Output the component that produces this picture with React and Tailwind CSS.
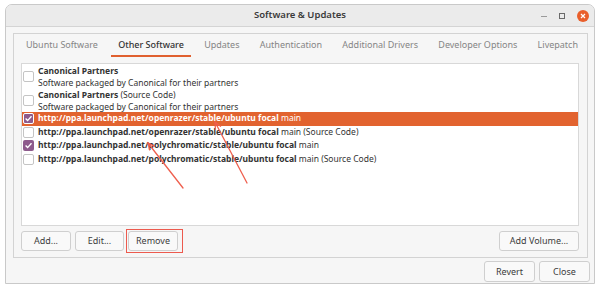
import React from "react";

const tabs = [
  "Ubuntu Software",
  "Other Software",
  "Updates",
  "Authentication",
  "Additional Drivers",
  "Developer Options",
  "Livepatch",
];

const sources = [
  { url: "http://ppa.launchpad.net/openrazer/stable/ubuntu focal", on: true, active: true },
  { url: "http://ppa.launchpad.net/openrazer/stable/ubuntu focal", on: false, src: true },
  { url: "http://ppa.launchpad.net/polychromatic/stable/ubuntu focal", on: true },
  { url: "http://ppa.launchpad.net/polychromatic/stable/ubuntu focal", on: false, src: true },
];

function Check({ on, light }) {
  if (on) {
    return (
      <span
        className={
          "w-[11px] h-[11px] rounded-[2px] bg-[#8d5a8c] flex items-center justify-center shrink-0 " +
          (light ? "border border-white" : "")
        }
      >
        <svg width="9" height="9" viewBox="0 0 9 9">
          <path d="M1.6 4.6l2 2 3.9-4.4" stroke="white" strokeWidth="1.4" fill="none" />
        </svg>
      </span>
    );
  }
  return <span className="w-[11px] h-[11px] rounded-[2px] bg-white border border-[#c4c4c4] shrink-0" />;
}

function Btn({ children, className = "" }) {
  return (
    <div
      className={
        "h-[20px] flex items-center justify-center bg-[#f9f9f9] border border-[#cfcfcf] rounded-[3px] text-[9px] text-[#3c3c3c] " +
        className
      }
    >
      {children}
    </div>
  );
}

export default function App() {
  return (
    <div className="relative w-[600px] h-[289px] bg-white pt-[4px] pl-[5px] font-['Noto_Sans',sans-serif]">
      <div className="w-[590px] h-[280px] border border-[#c9c9c9] rounded-t-[7px] bg-[#f6f6f6] flex flex-col overflow-hidden">
        {/* title bar */}
        <div className="h-[22px] bg-[#ebebeb] border-b border-[#d4d4d4] flex items-center relative shrink-0">
          <div className="flex-1 text-center text-[9.5px] font-semibold text-[#3a3a3a]">Software &amp; Updates</div>
          <div className="absolute right-[5px] top-[5px] flex items-center gap-[12px]">
            <span className="w-[6px] h-px bg-[#9a9a9a]" />
            <span className="w-[6px] h-[6px] border border-[#6a6a6a]" />
            <span className="w-[12px] h-[12px] rounded-full bg-[#e95f2b] flex items-center justify-center">
              <svg width="6" height="6" viewBox="0 0 6 6">
                <path d="M1 1l4 4M5 1L1 5" stroke="white" strokeWidth="1.2" />
              </svg>
            </span>
          </div>
        </div>

        {/* notebook */}
        <div className="mt-[6px] ml-[7px] w-[575px] h-[225px] border border-[#d3d3d3] flex flex-col">
          <div className="h-[23px] flex justify-between pl-[5px] pr-[2px] shrink-0">
            {tabs.map((t) => (
              <div
                key={t}
                className={
                  "px-[7px] flex items-center text-[9px] border-b-2 " +
                  (t === "Other Software"
                    ? "border-[#e0602f] text-[#333] font-medium"
                    : "border-transparent text-[#858585]")
                }
              >
                {t}
              </div>
            ))}
          </div>

          <div className="mt-[6px] ml-[7px] w-[558px] h-[163px] border border-[#d8d8d8] bg-white flex flex-col shrink-0">
            <div className="h-[24px] pt-[1px] flex items-center pl-[1px] gap-[4px]">
              <Check />
              <div className="text-[8.5px] leading-[11.5px] text-[#333]">
                <div className="font-bold">Canonical Partners</div>
                <div>Software packaged by Canonical for their partners</div>
              </div>
            </div>
            <div className="h-[24px] pt-[1px] flex items-center pl-[1px] gap-[4px]">
              <Check />
              <div className="text-[8.5px] leading-[11.5px] text-[#333]">
                <div>
                  <span className="font-bold">Canonical Partners</span> (Source Code)
                </div>
                <div>Software packaged by Canonical for their partners</div>
              </div>
            </div>
            {sources.map((s, i) => (
              <div
                key={i}
                className={
                  "h-[13.5px] flex items-center pl-[1px] gap-[4px] text-[8.5px] " +
                  (s.active ? "bg-[#e2632f] text-white" : "text-[#333]")
                }
              >
                <Check on={s.on} light={s.active} />
                <span className="whitespace-nowrap">
                  <span className="font-bold">{s.url}</span> main{s.src ? " (Source Code)" : ""}
                </span>
              </div>
            ))}
          </div>

          <div className="mt-[3px] ml-[7px] w-[558px] flex items-center">
            <Btn className="w-[50px]">Add...</Btn>
            <Btn className="w-[49px] ml-[4px]">Edit...</Btn>
            <div className="ml-[2px] border-[1.5px] border-[#ec5a4e] p-[1px] pr-[4px]">
              <Btn className="w-[50px]">Remove</Btn>
            </div>
            <Btn className="w-[80px] ml-auto">Add Volume...</Btn>
          </div>
        </div>

        <div className="mt-[3px] flex justify-end gap-[4px] pr-[4px]">
          <Btn className="w-[51px] h-[21px]">Revert</Btn>
          <Btn className="w-[51px] h-[21px]">Close</Btn>
        </div>
      </div>

      {/* annotation arrows */}
      <svg className="absolute inset-0 pointer-events-none" width="600" height="289">
        <g stroke="#ef5f4e" strokeWidth="1.3" fill="none" strokeLinecap="round">
          <path d="M183 188L148 143" />
          <path d="M149.6 149.8L148 143L154.2 146.2" />
          <path d="M247 183L215 122" />
          <path d="M215.4 129L215 122L220.6 126.2" />
        </g>
      </svg>
    </div>
  );
}
